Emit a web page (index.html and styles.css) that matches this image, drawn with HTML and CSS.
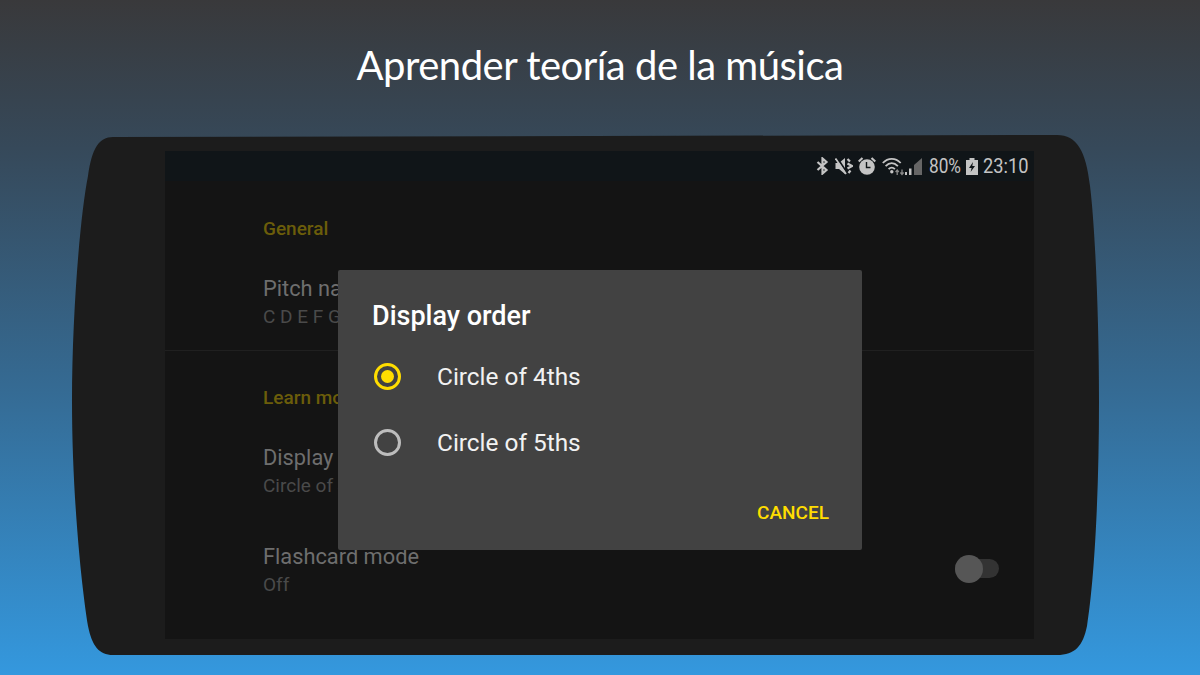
FILE: index.html
```html
<!DOCTYPE html>
<html lang="es">
<head>
    <meta charset="UTF-8">
    <meta name="viewport" content="width=device-width, initial-scale=1.0">
    <title>Aprender teoría de la música</title>
    <link rel="stylesheet" href="styles.css">
</head>
<body>
    <h1 class="headline">Aprender teoría de la música</h1>

    <div class="phone">
        <svg class="phone-body" viewBox="0 0 1040 525" width="1040" height="525">
            <path d="M41 1 L985 -1 C1005 -1 1014 15 1018 50 C1023 90 1027 180 1027 265 C1027 350 1023 440 1015 490 C1011 510 1003 519 985 519 H41 C27 519 20 510 16 490 C8 440 0 350 0 265 C0 180 8 80 16 40 C20 12 27 1 41 1 Z"/>
        </svg>

        <div class="screen">
            <div class="status-bar">
                <!-- bluetooth -->
                <svg class="status-icon bluetooth" width="13" height="18" viewBox="0 0 13 18"><path d="M1.5 5 L10.5 13 L6.5 16.5 V1.5 L10.5 5 L1.5 13" fill="none" stroke="#c4c4c4" stroke-width="2.2"/></svg>
                <!-- muted speaker -->
                <svg class="status-icon mute" width="18" height="18" viewBox="0 0 18 18"><path d="M0.5 6 H4 L10 1 V17 L4 12 H0.5 Z" fill="#c4c4c4"/><path d="M2.5 1.5 L12.5 16.5" stroke="#101518" stroke-width="2"/><path d="M0.5 1.5 L11 17" stroke="#c4c4c4" stroke-width="1.8"/><path d="M12.5 2 L15 4.5 M12.5 6.5 L17 9 L12.5 11.5 M13.5 16 L15.5 13.5" fill="none" stroke="#c4c4c4" stroke-width="2.2"/></svg>
                <!-- alarm -->
                <svg class="status-icon alarm" width="18" height="18" viewBox="0 0 18 18"><circle cx="9" cy="10" r="7.8" fill="#c4c4c4"/><path d="M8.5 5 V10.5 H12.5" fill="none" stroke="#101518" stroke-width="1.4"/><path d="M0.7 4.5 L4.5 1 M17.3 4.5 L13.5 1" stroke="#c4c4c4" stroke-width="2.2"/></svg>
                <!-- wifi with data arrows -->
                <svg class="status-icon wifi" width="24" height="19" viewBox="0 0 24 19"><path d="M0.8 6 C6 0.5 13.5 0.5 18.7 6 M3.6 9.2 C7.5 5.2 12 5.2 15.9 9.2 M6.6 12.2 C8.6 10 10.9 10 12.9 12.2" fill="none" stroke="#c4c4c4" stroke-width="1.8"/><circle cx="9.8" cy="14.8" r="1.7" fill="#c4c4c4"/><path d="M15.2 18 V13.5 M13.6 15 L15.2 13 L16.8 15" fill="none" stroke="#8a8a8a" stroke-width="1.3"/><path d="M20 12.5 V17 M18.4 15.5 L20 17.5 L21.6 15.5" fill="none" stroke="#8a8a8a" stroke-width="1.3"/></svg>
                <!-- signal -->
                <svg class="status-icon signal" width="17" height="17" viewBox="0 0 17 17"><path d="M0 17 V14 H2 V17 Z" fill="#c4c4c4"/><path d="M4 17 V10.5 H6.5 V17 Z" fill="#c4c4c4"/><path d="M9 17 V7 L17 0 V17 Z" fill="#666"/></svg>
                <span class="status-text percent">80%</span>
                <!-- charging battery -->
                <svg class="status-icon battery" width="12" height="17" viewBox="0 0 12 17"><path d="M3.5 0 H8.5 V2 H12 V17 H0 V2 H3.5 Z" fill="#c4c4c4"/><path d="M7 4 L3 10 H5.6 L4.6 14 L9 8 H6.3 Z" fill="#101518"/></svg>
                <span class="status-text clock">23:10</span>
            </div>

            <div class="settings">
                <section class="settings-group first">
                    <h2 class="group-label">General</h2>
                    <div class="row">
                        <div>
                            <div class="row-title">Pitch names</div>
                            <div class="row-sub">C D E F G A B</div>
                        </div>
                    </div>
                </section>

                <section class="settings-group">
                    <h2 class="group-label">Learn mode</h2>
                    <div class="row">
                        <div>
                            <div class="row-title">Display order</div>
                            <div class="row-sub">Circle of 4ths</div>
                        </div>
                    </div>
                    <div class="row">
                        <div>
                            <div class="row-title">Flashcard mode</div>
                            <div class="row-sub">Off</div>
                        </div>
                        <div class="switch"><div class="switch-thumb"></div></div>
                    </div>
                </section>
            </div>

            <div class="dialog">
                <div class="dialog-title">Display order</div>
                <div class="option">
                    <span class="radio checked"></span>
                    <span>Circle of 4ths</span>
                </div>
                <div class="option">
                    <span class="radio"></span>
                    <span>Circle of 5ths</span>
                </div>
                <div class="dialog-actions">
                    <span class="cancel">CANCEL</span>
                </div>
            </div>
        </div>
    </div>
</body>
</html>
```

FILE: styles.css
```css
html, body {
    margin: 0;
    padding: 0;
}

body {
    width: 1200px;
    height: 675px;
    overflow: hidden;
    font-family: Roboto, "Liberation Sans", sans-serif;
    background: linear-gradient(to bottom, #39393b 0%, #36495a 22%, #356b94 58%, #3498de 100%);
}

.headline {
    margin: 0;
    padding-top: 40px;
    height: 96px;
    box-sizing: border-box;
    text-align: center;
    color: #fff;
    font-family: Lato, "Open Sans", sans-serif;
    font-weight: 400;
    font-size: 40px;
    letter-spacing: -0.5px;
    line-height: 50px;
}

.phone {
    position: relative;
    margin: 40px 0 0 72px;
    width: 1040px;
    height: 525px;
    padding: 15px 0 0 93px;
    box-sizing: border-box;
}

.phone-body {
    position: absolute;
    left: 0;
    top: 0;
    overflow: visible;
}

.phone-body path {
    fill: #1c1c1c;
}

.screen {
    position: relative;
    width: 869px;
    height: 488px;
    background: #141414;
}

.status-bar {
    height: 30px;
    background: #101518;
    display: flex;
    align-items: center;
    justify-content: flex-end;
    padding-right: 6px;
}

.status-icon {
    display: block;
    flex: none;
}

.status-icon.bluetooth {
    margin-right: 6px;
}

.status-icon.mute {
    margin-right: 5px;
}

.status-icon.alarm {
    margin-right: 6px;
}

.status-icon.wifi {
    margin-right: -1px;
}

.status-icon.signal {
    margin-right: 7px;
}

/* narrow status bar digits, Roboto squeezed to the condensed width */
.status-text {
    display: block;
    flex: none;
    color: #c4c4c4;
    font-size: 21px;
    white-space: nowrap;
    transform-origin: left center;
}

.status-text.percent {
    width: 32px;
    margin-right: 5px;
    transform: scaleX(0.82);
}

.status-text.clock {
    width: 45px;
    margin-left: 5px;
    transform: scaleX(0.87);
}

.settings {
    padding-left: 98px;
}

.settings-group {
    padding-top: 36px;
}

.settings-group.first {
    padding-top: 37px;
    padding-bottom: 20px;
    margin-left: -98px;
    padding-left: 98px;
    border-bottom: 1px solid #202020;
}

.group-label {
    margin: 0;
    font-size: 19px;
    font-weight: 500;
    line-height: 22px;
    color: #6b5d0a;
}

.row {
    display: flex;
    justify-content: space-between;
    align-items: center;
    padding-right: 35px;
}

.group-label + .row {
    margin-top: 35px;
}

.row + .row {
    margin-top: 44px;
}

.row-title {
    font-size: 21.8px;
    line-height: 28px;
    color: #6e6e6e;
}

.row-sub {
    font-size: 19px;
    line-height: 27px;
    color: #4a4a4a;
}

.switch {
    position: relative;
    width: 44px;
    height: 19px;
    margin-bottom: 5px;
    border-radius: 10px;
    background: #333;
}

.switch-thumb {
    position: absolute;
    left: 0;
    top: -4px;
    width: 28px;
    height: 28px;
    border-radius: 50%;
    background: #565656;
}

.dialog {
    position: absolute;
    left: 173px;
    top: 119px;
    width: 524px;
    height: 280px;
    box-sizing: border-box;
    padding: 0 33px 0 34px;
    background: #424242;
    border-radius: 2px;
    color: #fff;
    display: flex;
    flex-direction: column;
}

.dialog-title {
    font-size: 27px;
    font-weight: 500;
    line-height: 32px;
    margin-top: 30px;
    margin-bottom: 11px;
}

.option {
    display: flex;
    align-items: center;
    height: 66px;
    font-size: 24.4px;
    color: #f2f2f2;
}

.radio {
    position: relative;
    width: 27px;
    height: 27px;
    box-sizing: border-box;
    margin: 0 36px 0 2px;
    border: 3px solid #bdbdbd;
    border-radius: 50%;
}

.radio.checked {
    border-color: #ffdd00;
}

.radio.checked::after {
    content: "";
    position: absolute;
    left: 4px;
    top: 4px;
    width: 13px;
    height: 13px;
    border-radius: 50%;
    background: #ffdd00;
}

.dialog-actions {
    margin-top: 26px;
    text-align: right;
}

.cancel {
    color: #ffdd00;
    font-size: 19px;
    font-weight: 500;
    line-height: 24px;
}
```
